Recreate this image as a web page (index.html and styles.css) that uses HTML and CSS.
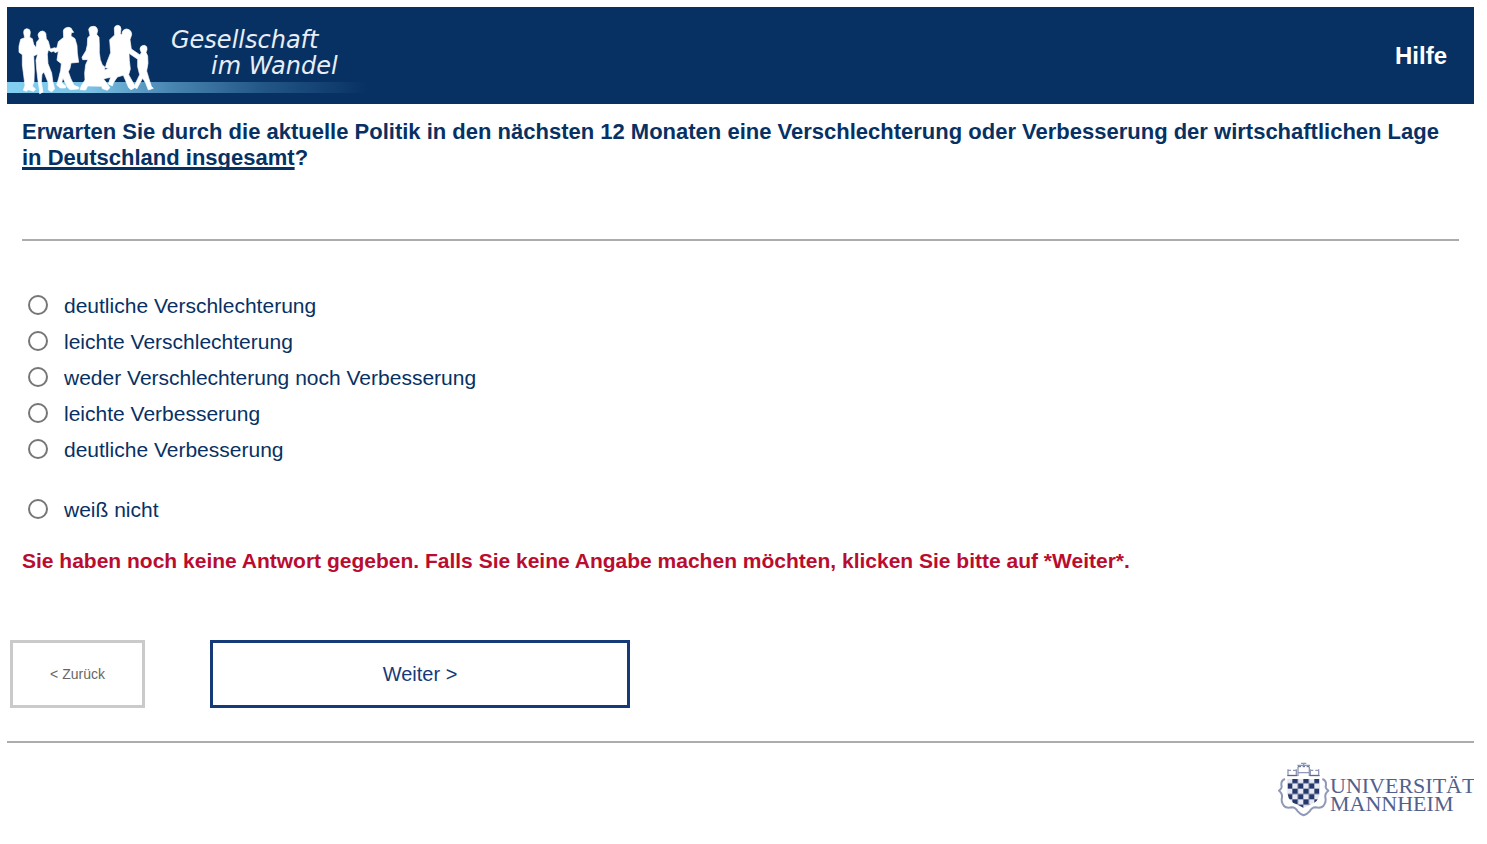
FILE: index.html
```html
<!DOCTYPE html>
<html lang="de">
<head>
<meta charset="utf-8">
<title>Gesellschaft im Wandel</title>
<link rel="stylesheet" href="styles.css">
</head>
<body>
<header class="banner">
  <svg class="brand" width="370" height="97" viewBox="7 7 370 97" role="img" aria-label="Gesellschaft im Wandel">
    <defs>
      <linearGradient id="band" x1="0" x2="1" y1="0" y2="0">
        <stop offset="0" stop-color="#82cff2"/>
        <stop offset="0.22" stop-color="#7cc4e8"/>
        <stop offset="0.45" stop-color="#4a86b2"/>
        <stop offset="0.7" stop-color="#245889"/>
        <stop offset="1" stop-color="#083163"/>
      </linearGradient>
    </defs>
    <rect x="7" y="82" width="360" height="11" fill="url(#band)"/>
    <g transform="scale(.3333)" fill="#fff" stroke="#fff" stroke-width="2" stroke-linejoin="round">
      <path d="M71 98Q70 87 80 86Q91 86 91 97L89 112L97 116L101 133L108 143L97 151L101 164L102 188L103 212L102 245L97 258L107 268L100 274L84 269L80 274L70 271L75 256L71 226L67 195L67 164L57 157L57 139L62 118L74 113Z"/>
      <path d="M114 105Q116 94 127 93Q139 95 138 107L139 116L145 124L151 147L165 143L168 151L154 156L145 150L142 163L144 191L155 219L159 248L164 267L155 275L145 270L145 249L132 217L126 222L124 247L129 276L119 281L118 267L114 242L110 207L108 181L113 163L102 167L92 154L108 143L110 126L118 117Z"/>
      <path d="M190 93Q192 82 207 82Q215 83 217 91L221 97L214 98L213 108L225 116L231 137L232 159L236 187L213 189L210 205L205 215L212 235L222 256L237 262L236 267L210 269L202 261L189 235L185 248L198 259L196 264L181 264L170 255L176 235L182 211L184 191L171 181L175 154L165 158L159 147L171 143L175 125L191 112Z"/>
      <path d="M266 88Q269 78 281 79Q291 79 293 92L290 103L297 112L298 135L298 158L301 179L307 195L314 200L315 229L311 237L330 263L322 271L307 266L305 259L263 258L257 270L240 269L244 257L255 240L254 219L257 194L264 179L248 179L246 172L258 152L262 135L263 114L270 106Z"/>
      <path d="M343 84Q345 76 353 76Q363 77 363 87L361 101L366 105Q365 88 380 87Q395 89 395 104L390 119L394 147L419 164L421 174L412 177L387 160L388 181L391 207L386 224L402 253L403 264L393 269L386 263L370 226L352 231L340 249L337 258L325 252L332 232L312 236L313 211L326 205L316 203L320 189L332 158L329 119L344 105Z"/>
      <path d="M420 147Q421 136 433 136Q443 138 441 149L438 157L443 168L444 190L440 213L446 233L454 259L460 265L445 270L437 249L428 235L415 258L411 266L401 261L410 243L419 224L413 200L413 179L420 164L424 158Z"/>
    </g>
    <text class="brand-text" x="171" y="48">Gesellschaft</text>
    <text class="brand-text" x="211" y="74">im Wandel</text>
  </svg>
  <a class="help" href="#hilfe">Hilfe</a>
</header>
<main>
  <form>
    <section class="question">
      <h1 id="frage">Erwarten Sie durch die aktuelle Politik in den nächsten 12 Monaten eine Verschlechterung oder Verbesserung der wirtschaftlichen Lage <span class="stress">in Deutschland insgesamt</span>?</h1>
      <div class="answers" role="radiogroup" aria-labelledby="frage">
        <label class="answer"><input type="radio" name="lage" value="1">deutliche Verschlechterung</label>
        <label class="answer"><input type="radio" name="lage" value="2">leichte Verschlechterung</label>
        <label class="answer"><input type="radio" name="lage" value="3">weder Verschlechterung noch Verbesserung</label>
        <label class="answer"><input type="radio" name="lage" value="4">leichte Verbesserung</label>
        <label class="answer"><input type="radio" name="lage" value="5">deutliche Verbesserung</label>
        <label class="answer separate"><input type="radio" name="lage" value="9">weiß nicht</label>
      </div>
      <p class="warning" role="alert">Sie haben noch keine Antwort gegeben. Falls Sie keine Angabe machen möchten, klicken Sie bitte auf *Weiter*.</p>
    </section>
    <div class="actions">
      <button class="back" type="button">&lt; Zurück</button>
      <button class="next" type="button">Weiter &gt;</button>
    </div>
  </form>
</main>
<footer class="footer">
  <svg width="198" height="58" viewBox="0 0 198 58" role="img" aria-label="Universität Mannheim">
    <defs>
      <pattern id="checks" x="49" y="54" width="33" height="32" patternUnits="userSpaceOnUse">
        <path fill="#e6e9f2" d="M0 0h33v32H0z"/>
        <path fill="#26376c" d="M0 0h16.500v16H0zM16.500 16h16.500v16h-16.500z"/>
      </pattern>
    </defs>
    <g transform="scale(.3333)">
      <path d="M35 57H130V102Q128 126 104 133L83 144L62 133Q38 126 35 102Z" fill="url(#checks)"/>
      <g fill="none" stroke="#8f99b7" stroke-linejoin="round">
        <path stroke-width="6" d="M27 57Q15 61 16 75Q20 84 9 92Q20 101 18 112Q14 124 24 138Q31 146 48 142Q58 142 66 155Q73 163 83 166Q93 163 100 155Q108 142 118 142Q135 146 142 138Q152 124 148 112Q146 101 157 92Q146 84 150 75Q151 61 139 57"/>
        <path stroke-width="4" d="M36 28V46H61V28M36 31H45M51 31H61M103 28V46H128V28M103 31H112M118 31H128M66 48V20M100 48V20M64 16H102M66 38H100M83 16V8M75 10H91"/>
        <path stroke="#4e5e8c" stroke-width="3" d="M34 47H64M101 47H131M66 20H75M80 20H87M92 20H100"/>
      </g>
    </g>
    <text class="uni-text" x="54" y="33">UNIVERSITÄT</text>
    <text class="uni-text" x="54" y="51">MANNHEIM</text>
  </svg>
</footer>
</body>
</html>
```

FILE: styles.css
```css
* {
  box-sizing: border-box;
}

body {
  margin: 7px 13px 7px 7px;
  background: #fff;
  color: #083163;
  font-family: Arial, "Liberation Sans", sans-serif;
}

.banner {
  display: flex;
  align-items: center;
  justify-content: space-between;
  padding-right: 27px;
  background: #083163;
}

.brand {
  display: block;
}

.brand-text {
  fill: #e8eef6;
  font: italic 24px "DejaVu Sans", sans-serif;
}

.help {
  color: #fff;
  font-size: 24px;
  font-weight: bold;
  text-decoration: none;
}

.question {
  padding: 15px 15px 0;
}

h1 {
  min-height: 122px;
  margin: 0;
  border-bottom: 2px solid #acacac;
  font-size: 22px;
  line-height: 26px;
}

.stress {
  text-decoration: underline;
  text-decoration-thickness: 3px;
  text-underline-offset: 2px;
  text-decoration-skip-ink: none;
}

.answers {
  display: flex;
  flex-direction: column;
  align-items: flex-start;
  padding-top: 47px;
}

.answer {
  display: flex;
  align-items: center;
  gap: 16px;
  padding-left: 6px;
  font-size: 21px;
  line-height: 36px;
}

.answer input {
  appearance: none;
  width: 20px;
  height: 20px;
  margin: 0 0 3px;
  border: 2px solid #767676;
  border-radius: 50%;
  background: #fff;
}

.answer input:checked {
  background: #083163;
  box-shadow: inset 0 0 0 3px #fff;
}

.separate {
  margin-top: 24px;
}

.warning {
  margin: 20px 0 0;
  color: #ba0c2f;
  font-size: 21px;
  font-weight: bold;
  line-height: 26px;
}

.actions {
  display: flex;
  gap: 65px;
  padding: 66px 3px 33px;
}

.actions button {
  height: 68px;
  border: 3px solid #cacaca;
  background: #fff;
  color: #666;
  font-family: inherit;
  font-size: 14px;
}

.actions .back {
  width: 135px;
}

.actions .next {
  width: 420px;
  border-color: #163a78;
  color: #163a78;
  font-size: 20px;
}

.footer {
  display: flex;
  justify-content: flex-end;
  padding-top: 17px;
  border-top: 2px solid #acacac;
}

.uni-text {
  fill: #52618c;
  font: 22px "Liberation Serif", serif;
}
```
